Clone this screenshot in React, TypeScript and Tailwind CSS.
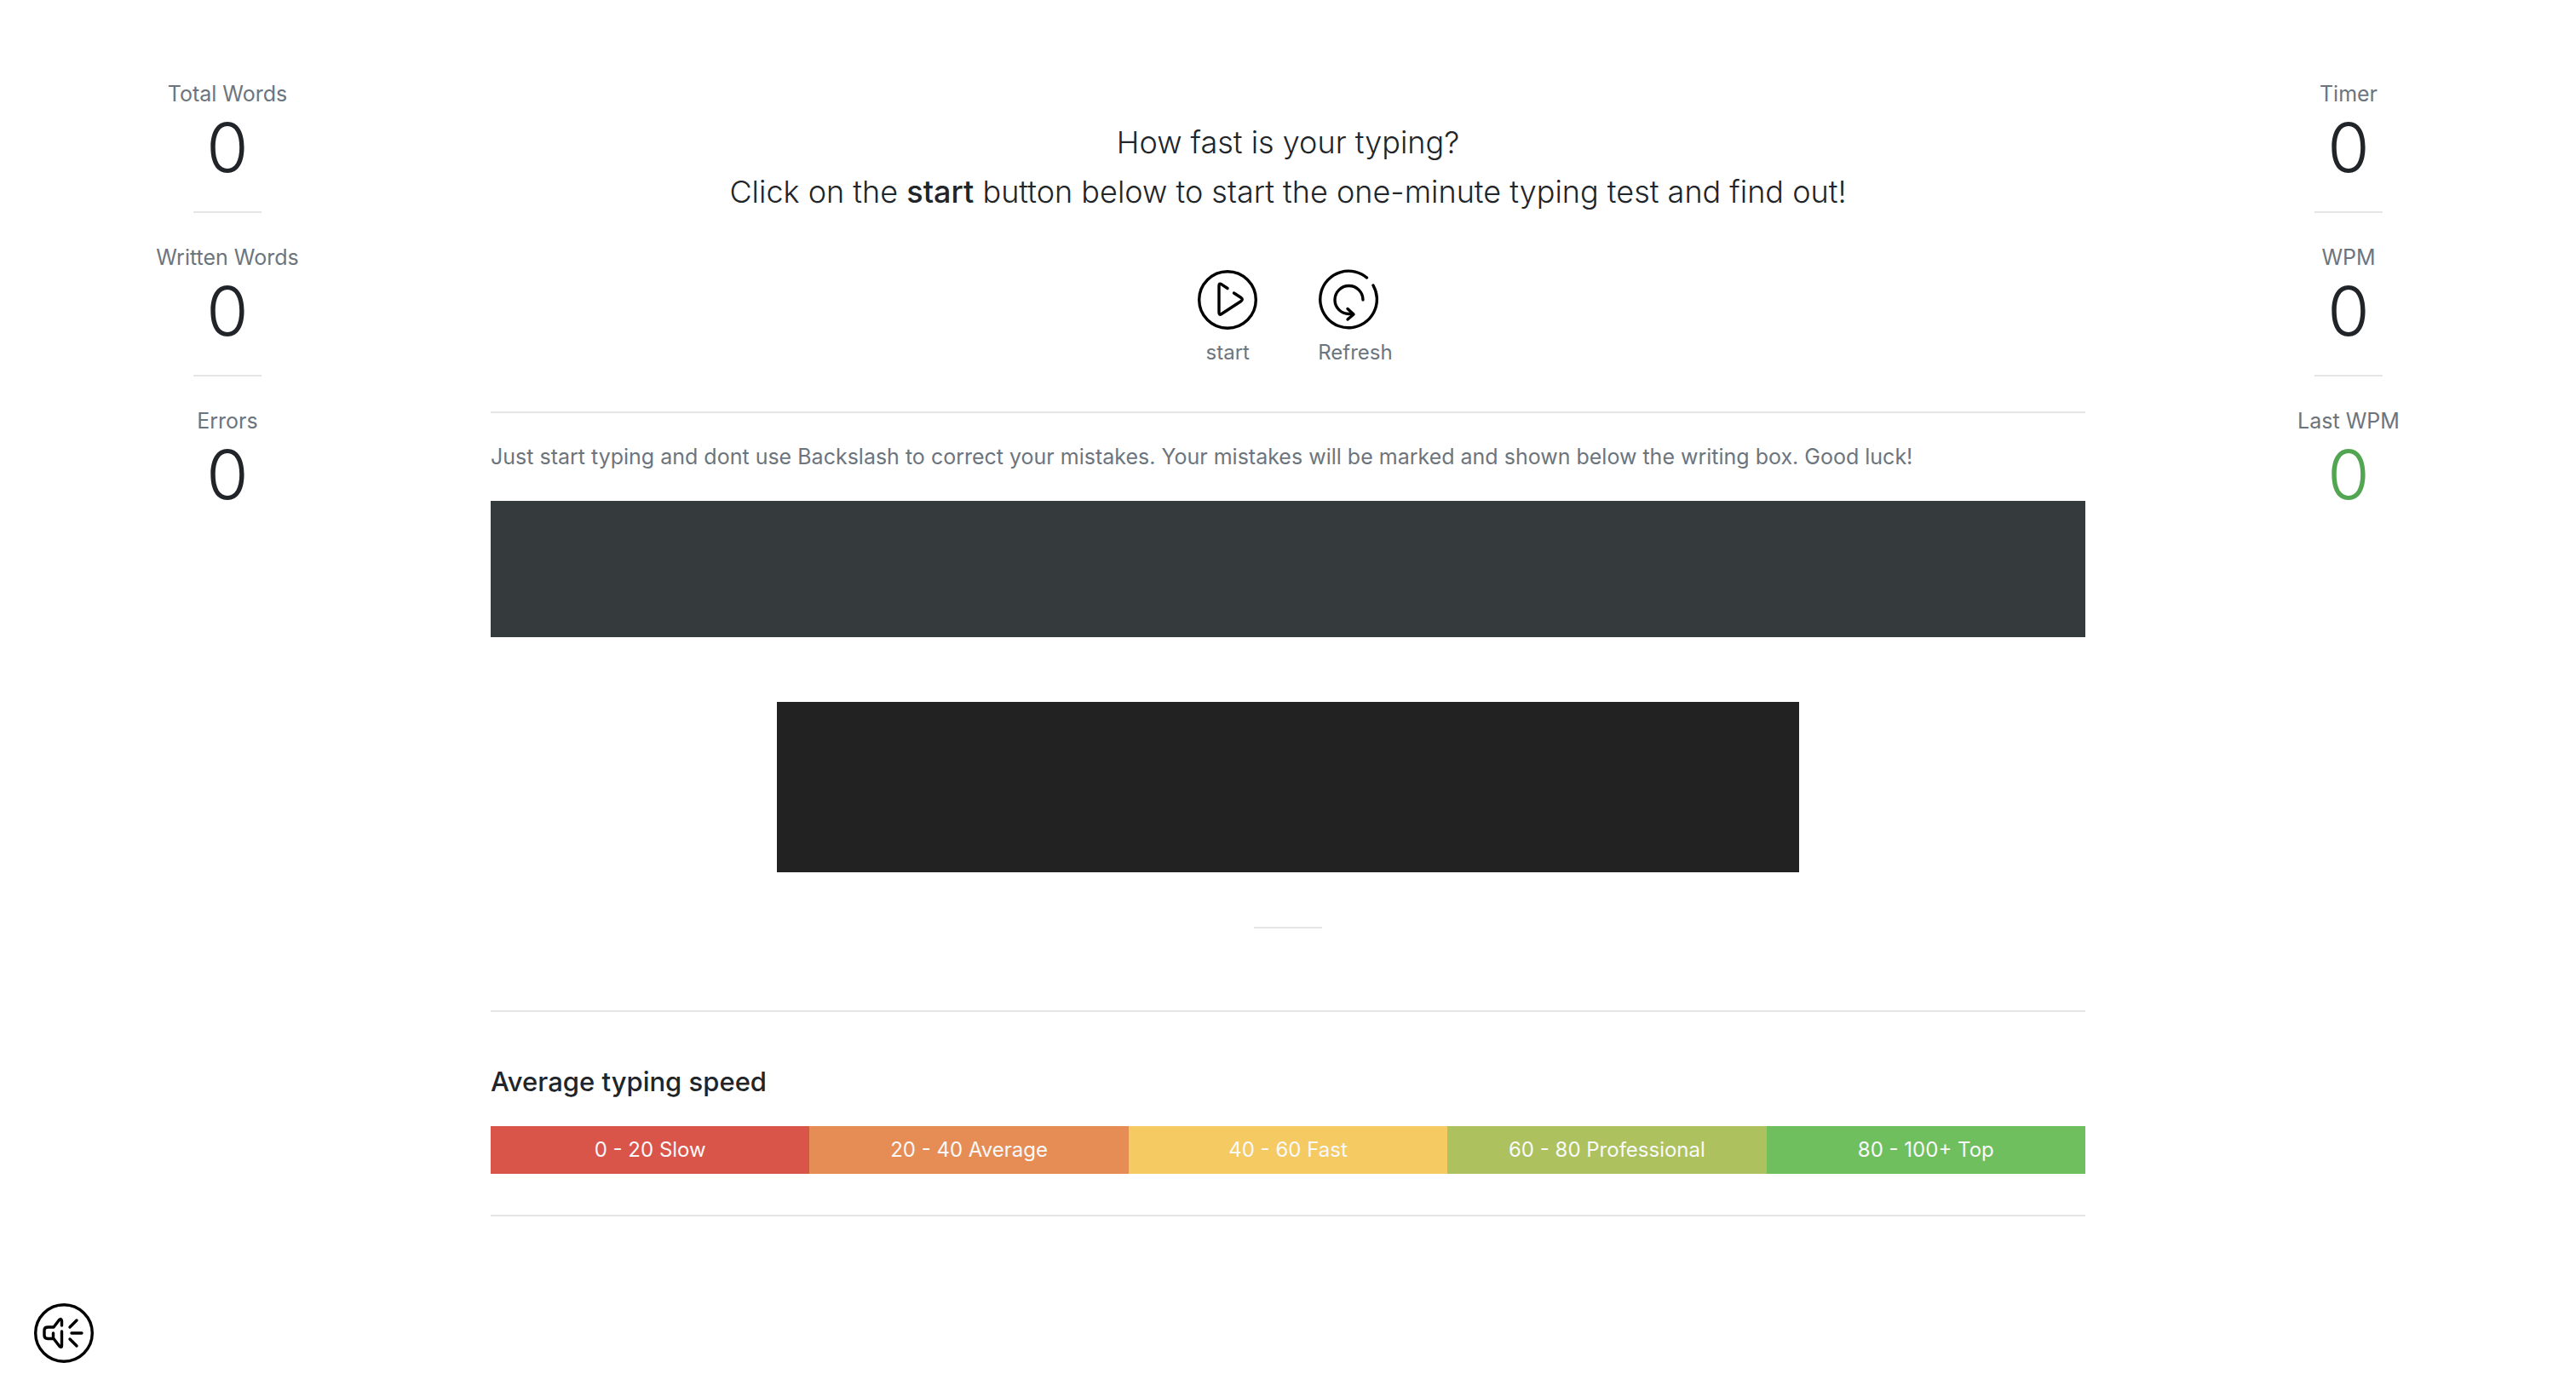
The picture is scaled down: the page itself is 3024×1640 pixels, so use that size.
import { Fragment, type ReactNode } from "react";

type Stat = { label: string; value: number; tone?: string };

const leftStats: Stat[] = [
  { label: "Total Words", value: 0 },
  { label: "Written Words", value: 0 },
  { label: "Errors", value: 0 },
];

const rightStats: Stat[] = [
  { label: "Timer", value: 0 },
  { label: "WPM", value: 0 },
  { label: "Last WPM", value: 0, tone: "text-[#52a652]" },
];

const levels = [
  { label: "0 - 20 Slow", color: "bg-[#da5549]" },
  { label: "20 - 40 Average", color: "bg-[#e68d55]" },
  { label: "40 - 60 Fast", color: "bg-[#f5ca63]" },
  { label: "60 - 80 Professional", color: "bg-[#adc25f]" },
  { label: "80 - 100+ Top", color: "bg-[#70bf5f]" },
];

function Stats({ items }: { items: Stat[] }) {
  return (
    <aside className="flex flex-col items-center pt-[90px]">
      {items.map((s, i) => (
        <Fragment key={s.label}>
          {i > 0 && <hr className="mt-8 mb-8 w-20 border-t-2 border-[#e5e5e5]" />}
          <div className="flex flex-col items-center">
            <span className="text-[25px] leading-[40px] text-[#6c757d]">{s.label}</span>
            <span className={`text-[80px] leading-[86px] font-[350] ${s.tone ?? ""}`}>{s.value}</span>
          </div>
        </Fragment>
      ))}
    </aside>
  );
}

function Icon({ children }: { children: ReactNode }) {
  return (
    <svg
      viewBox="0 0 72 72"
      className="size-[72px]"
      fill="none"
      stroke="#000"
      strokeWidth="3.4"
      strokeLinecap="round"
      strokeLinejoin="round"
      aria-hidden="true"
    >
      {children}
    </svg>
  );
}

export default function App() {
  return (
    <div className="relative min-h-screen bg-white font-['Inter',sans-serif] text-[#212529]">
      <div className="grid grid-cols-[534fr_1956fr_534fr]">
        <Stats items={leftStats} />

        <main className="px-[42px] pt-[138px]">
          <p className="text-center text-[36px] leading-[58px] font-[350]">
            How fast is your typing?
            <br />
            Click on the <strong className="font-medium">start</strong> button below to start the one-minute
            typing test and find out!
          </p>

          <div className="mt-[62px] flex justify-center gap-[70px] pl-4 text-[24px] leading-[36px] text-[#6c757d]">
            <button type="button" className="flex flex-col items-start">
              <Icon>
                <circle cx="36" cy="36" r="33.3" />
                <path d="M36 22.5 29 17.8Q26 16 26 19.500V50.500Q26 54.500 29 52.500L52 37.500Q54.500 35.500 52 33.500L43.500 28" />
              </Icon>
              <span className="mt-2 w-full text-center">start</span>
            </button>
            <button type="button" className="flex flex-col items-start">
              <Icon>
                <path d="M57.500 10A33.300 33.300 0 1 0 65 19" />
                <path d="M53 36A16.500 16.500 0 1 0 36.500 52.500H41" />
                <path d="M35 46.500 42 53 35 59" />
              </Icon>
              <span className="mt-2">Refresh</span>
            </button>
          </div>

          <hr className="mt-[51px] border-t-2 border-[#e5e5e5]" />
          <p className="mt-[31px] text-[25px] leading-[40px] text-[#6c757d]">
            Just start typing and dont use Backslash to correct your mistakes. Your mistakes will be marked and
            shown below the writing box. Good luck!
          </p>
          <div className="mt-8 h-[160px] bg-[#353a3d]" />
          <textarea
            aria-label="Writing box"
            className="mx-auto mt-[76px] block h-[200px] w-full max-w-[1200px] resize-none bg-[#222] text-white outline-none"
          />
          <hr className="mx-auto mt-16 w-20 border-t-2 border-[#e5e5e5]" />
          <hr className="mt-24 border-t-2 border-[#e5e5e5]" />

          <h1 className="mt-[62px] text-[31px] leading-[40px] font-medium">Average typing speed</h1>
          <ul className="mt-8 grid grid-cols-5 text-center text-[24px] leading-[56px] text-[#f8f9fa]">
            {levels.map((l) => (
              <li key={l.label} className={l.color}>
                {l.label}
              </li>
            ))}
          </ul>
          <hr className="mt-12 border-t-2 border-[#e5e5e5]" />
        </main>

        <Stats items={rightStats} />
      </div>

      <button type="button" aria-label="Toggle sound" className="absolute bottom-[39px] left-[39px]">
        <Icon>
          <circle cx="36" cy="36" r="33.3" />
          <path d="M33.500 27V21.500Q33 18 30.500 20.500L24 29H17.500Q13 29 13 32.500V38.500Q13 42.500 17 42.500H24L30.500 51Q33.500 54 33.500 50.500V34M23.500 36V42" />
          <path d="M43 29 51 21M45 36H57M43 43 51 51" />
        </Icon>
      </button>
    </div>
  );
}
